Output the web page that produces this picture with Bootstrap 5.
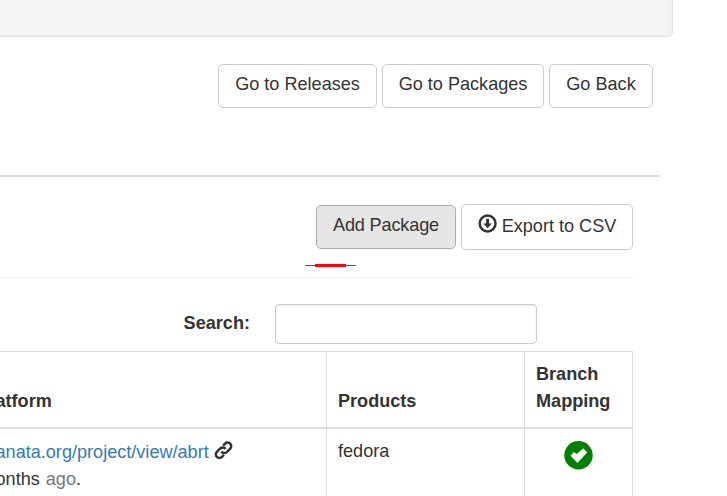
<!DOCTYPE html>
<html lang="en">
<head>
<meta charset="utf-8">
<meta name="viewport" content="width=device-width, initial-scale=1">
<title>Packages</title>
<link rel="stylesheet" href="https://cdn.jsdelivr.net/npm/bootstrap@5.3.0/dist/css/bootstrap.min.css">
<style>
body{font-family:"Liberation Sans",Arial,sans-serif;font-size:18.1px;line-height:27px;color:#333;background:#fff;overflow:hidden;height:496px}
.top-panel{width:673px;height:37px;background:#f4f4f4;border:solid #e2e2e2;border-width:0 1px 1px 0;border-radius:0 0 5px 0;box-shadow:inset -1px -1px 1px rgba(0,0,0,.02)}
.page-actions{width:653px;margin-top:27px;gap:5px}
.btn-plain{--bs-btn-font-size:18.1px;--bs-btn-line-height:27px;--bs-btn-padding-x:0;--bs-btn-padding-y:0;--bs-btn-color:#333;--bs-btn-border-color:#ccc;--bs-btn-bg:#fff;--bs-btn-border-radius:5px;height:44px;padding-bottom:3px;white-space:nowrap}
.btn-pressed{--bs-btn-bg:#e6e6e6;--bs-btn-border-color:#adadad;margin-top:1px;letter-spacing:-.15px}
.w-rel{width:159px}.w-pkg{width:162px}.w-back{width:104px}.w-add{width:140px}.w-csv{width:172px;height:46px;padding-top:8px}
.rule-main{width:660px;height:2px;margin-top:67px;background:#ddd}
.content-area{width:633px}
.tool-row{margin-top:27px;gap:5px}
.stroke-line{width:51px;height:3px;margin:14px 0 0 305px}
.rule-thin{height:1px;margin-top:10px;background:#eee}
.search-row{margin-top:26px;height:40px;padding-right:96px;gap:25px}
.search-row label{padding-top:6px}
.search-row .form-control{width:262px;height:40px;border:1px solid #ccc;border-radius:4px;box-shadow:inset 0 1px 2px rgba(0,0,0,.09)}
.grid-table{width:633px;margin-top:7px;table-layout:fixed;border-collapse:separate;border-spacing:0;color:#333;--bs-table-color:#333;border-top:1px solid #ddd}
.grid-table>:not(caption)>*>*{padding:9px 11px 8px;border:0 solid #ddd;border-right-width:1px;background:#fff;box-shadow:none}
.grid-table>thead>tr>th{height:77px;padding-top:8px;padding-bottom:12px;border-bottom-width:2px;vertical-align:bottom}
.grid-table>tbody>tr>td{height:90px}
.grid-table>:not(caption)>*>.col-platform{padding-left:0}
.platform-text{white-space:nowrap;margin-left:-4.5px}
.platform-link{padding-top:1px}
.platform-text a{color:#337ab7;text-decoration:none}
.muted-word{color:#777;margin-left:1px}
svg{display:block}
.platform-text svg{margin-left:5px;margin-top:-1px}
</style>
<script src="https://cdn.jsdelivr.net/npm/bootstrap@5.3.0/dist/js/bootstrap.bundle.min.js"></script>
</head>
<body>
<div class="top-panel"></div>
<div class="page-actions d-flex justify-content-end">
  <button class="btn btn-plain w-rel">Go to Releases</button>
  <button class="btn btn-plain w-pkg">Go to Packages</button>
  <button class="btn btn-plain w-back">Go Back</button>
</div>
<div class="rule-main"></div>
<main class="content-area">
  <div class="tool-row d-flex justify-content-end">
    <button class="btn btn-plain btn-pressed w-add">Add Package</button>
    <button class="btn btn-plain w-csv d-flex justify-content-center">
      <svg class="me-1" width="20" height="22" viewBox="0 0 20 22"><circle cx="9.600" cy="10.500" r="7.900" fill="none" stroke="#333" stroke-width="2.500"/><path d="M8.100 5.800h3v4.700h2.700L9.600 15.300 5.400 10.500h2.700z" fill="#333"/></svg>
      <span>Export to CSV</span>
    </button>
  </div>
  <svg class="stroke-line" width="51" height="3" viewBox="0 0 51 3" shape-rendering="crispEdges"><path d="M0 1h51v1H0z" fill="#f5101c"/><path d="M10 0h31v3H10z" fill="#ff0018"/></svg>
  <div class="rule-thin"></div>
  <div class="search-row d-flex justify-content-end">
    <label class="fw-bold" for="search">Search:</label>
    <input id="search" type="text" class="form-control">
  </div>
  <table class="table grid-table mb-0">
    <colgroup><col style="width:327px"><col style="width:198px"><col style="width:108px"></colgroup>
    <thead><tr><th class="col-platform"><div class="platform-text">atform</div></th><th>Products</th><th>Branch Mapping</th></tr></thead>
    <tbody><tr>
      <td class="col-platform">
        <div class="platform-text platform-link d-flex"><a href="#">anata.org/project/view/abrt</a>
          <svg width="19" height="24" viewBox="0 0 19 24" fill="none" stroke="#333" stroke-width="2.500"><g transform="translate(9.500 12.300) rotate(-45)"><path d="M-3 3.600H-5.800a3.600 3.600 0 0 1 0-7.200H-1a3.600 3.600 0 0 1 3.400 4.200"/><path d="M3-3.600H5.800a3.600 3.600 0 0 1 0 7.200H1a3.600 3.600 0 0 1-3.400-4.200"/></g></svg>
        </div>
        <div class="platform-text">onths <span class="muted-word">ago</span>.</div>
      </td>
      <td>fedora</td>
      <td><svg class="mx-auto" width="29" height="34" viewBox="0 0 29 34"><circle cx="14.500" cy="17.300" r="14.200" fill="#008000"/><path d="M6.500 17.800 9.800 14.100 12.800 16 19.300 10.300 23.200 14.500 13.400 25z" fill="#fff"/></svg></td>
    </tr></tbody>
  </table>
</main>
</body>
</html>
